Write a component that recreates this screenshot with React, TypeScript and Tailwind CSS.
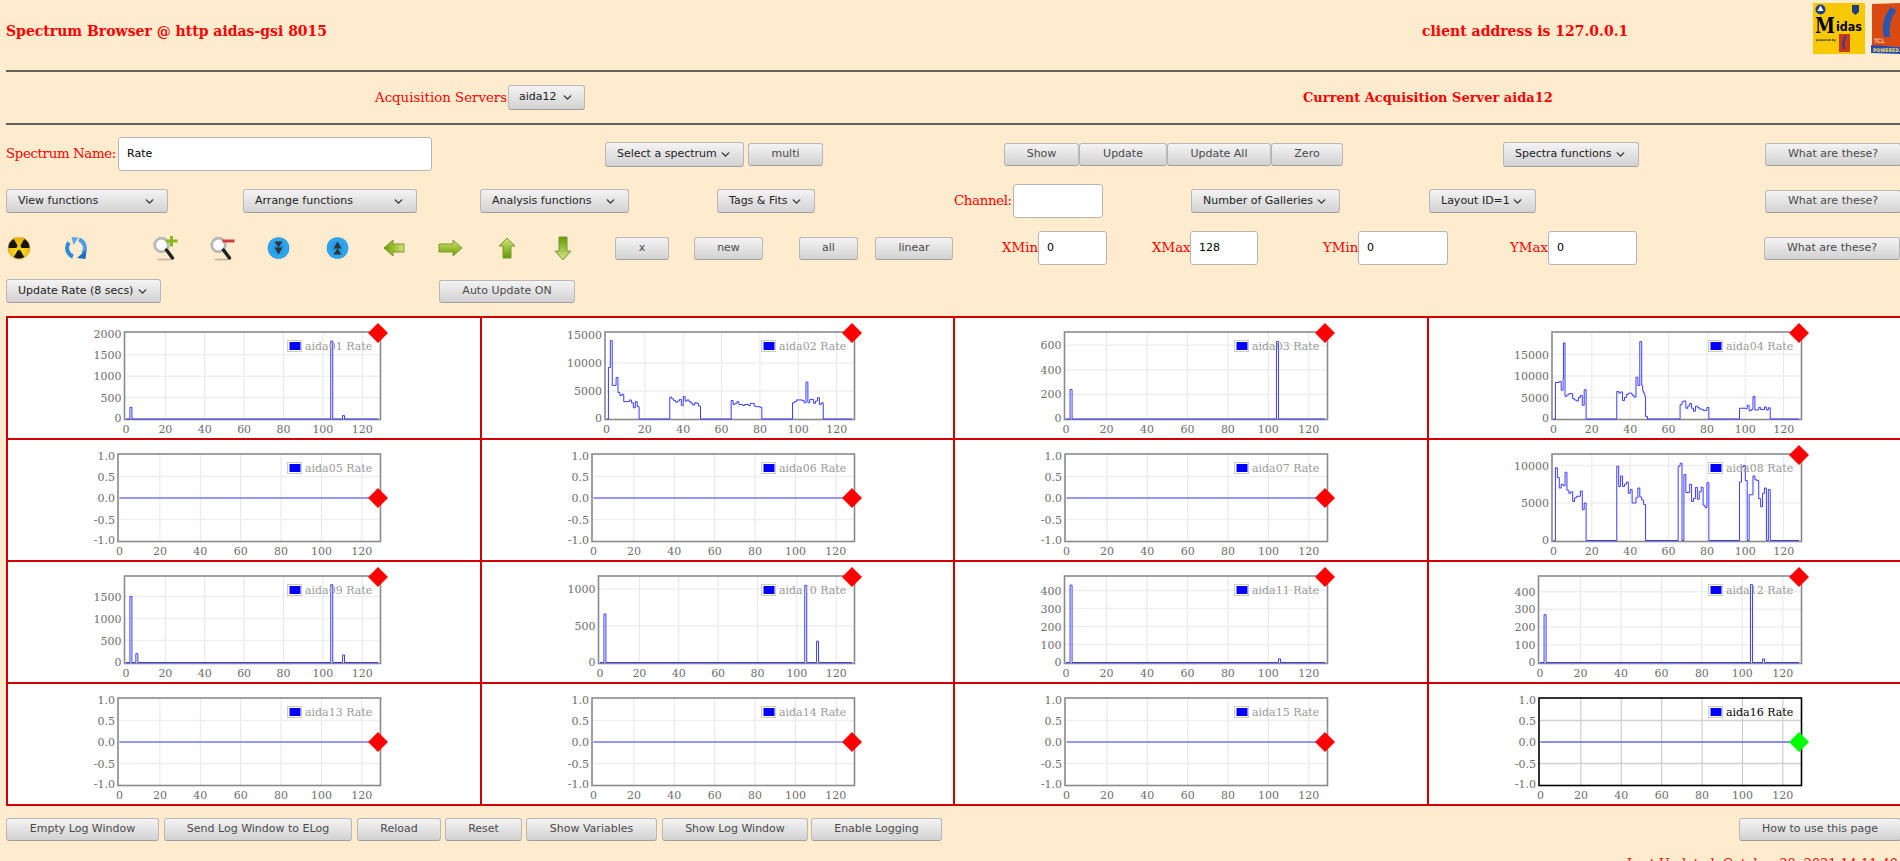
import type { ReactNode } from 'react'
import { ChevronDown } from 'lucide-react'

type Step = [number, number]

type ChartDef = {
  name: string
  plotLeft: number
  y0: number
  ppu: number
  ticks: number[]
  steps?: Step[]
  flat?: boolean
  active?: boolean
}

const aida02: Step[] = [[1,9200],[2,14000],[3,6000],[5,7400],[6,4700],[7,4200],[8,4400],[9,3100],[12,3400],[13,2900],[14,2000],[15,3100],[16,2200],[17,0],
  [33,3900],[34,3600],[35,3300],[36,3000],[37,3200],[38,3500],[39,2400],[40,4000],[41,3200],[42,3400],[43,3100],[44,2800],[45,2500],[46,2900],[47,2800],[48,2300],[49,0],
  [65,3300],[66,2600],[67,2800],[68,3100],[69,2600],[71,2400],[72,2600],[74,2400],[75,2800],[77,2300],[78,2200],[80,2100],[81,0],
  [97,2900],[98,3100],[99,3400],[102,3300],[103,2900],[104,6600],[105,2900],[106,3500],[108,2800],[109,3200],[110,3800],[111,2600],[112,2900],[113,0]]

const aida04: Step[] = [[1,8500],[3,8700],[4,6700],[5,9400],[5.2,17700],[6,5300],[7,5600],[8,5900],[10,4700],[11,4400],[12,4200],[13,5000],[14,5500],[15,3200],[16,6800],[17,0],
  [33,6400],[34,6000],[35,6300],[36,4300],[37,5000],[38,5700],[39,6000],[41,5500],[42,5100],[43,9700],[44,7800],[45,18000],[46,7800],[46.5,6500],[47,6000],[47.6,5300],[48,600],[49,0],
  [66,3300],[67,4000],[68,4200],[69,2500],[70,3000],[71,3600],[72,2500],[73,1800],[74,3000],[75,2700],[76,2300],[78,2000],[80,2700],[81,0],
  [97,2500],[100,2400],[101,3200],[102,1900],[103,2200],[104,5200],[105,2100],[107,2700],[108,2200],[110,2800],[111,2100],[112,2600],[113,0]]

const aida08: Step[] = [[1,9700],[2,8400],[3,7000],[4,7500],[5,7300],[6,9100],[7,6700],[8,6300],[9,6500],[10,5200],[11,5700],[12,5900],[14,6600],[15,4100],[16,5000],[17,0],
  [33,9900],[34,7200],[35,8600],[36,7200],[37,7500],[38,7800],[39,6300],[40,6800],[41,5000],[43,5700],[44,7000],[45,5800],[46,5400],[47,4800],[48,0],
  [65,9900],[66,10300],[67,0],[68,8800],[69,6400],[71,7500],[72,5200],[73,5600],[74,7100],[75,5500],[76,6500],[77,7100],[78,4700],[79,4400],[80,7700],[81,0],
  [97,7800],[98,9800],[99,10000],[100,8000],[101,0],[102,6100],[104,8600],[105,8100],[106,8000],[107,5600],[108,4500],[109,6300],[110,7000],[111,0],[112,6800],[113,0]]

const flat = (name: string, plotLeft: number, active = false): ChartDef => ({
  name, plotLeft, y0: 60, ppu: 43, ticks: [1, 0.5, 0, -0.5, -1], flat: true, active,
})

const charts: ChartDef[] = [
  { name: 'aida01', plotLeft: 118.5, y0: 103, ppu: 0.0428, ticks: [2000, 1500, 1000, 500, 0], steps: [[2,270],[3,0],[104,1820],[105,0],[110,80],[111,0]] },
  { name: 'aida02', plotLeft: 125, y0: 103, ppu: 0.0056, ticks: [15000, 10000, 5000, 0], steps: aida02 },
  { name: 'aida03', plotLeft: 111.5, y0: 103, ppu: 0.123, ticks: [600, 400, 200, 0], steps: [[2,240],[3,0],[104,630],[105,0]] },
  { name: 'aida04', plotLeft: 125, y0: 103, ppu: 0.0043, ticks: [15000, 10000, 5000, 0], steps: aida04 },
  flat('aida05', 112), flat('aida06', 112), flat('aida07', 112),
  { name: 'aida08', plotLeft: 125, y0: 102.5, ppu: 0.0075, ticks: [10000, 5000, 0], steps: aida08 },
  { name: 'aida09', plotLeft: 118.5, y0: 102.5, ppu: 0.044, ticks: [1500, 1000, 500, 0], steps: [[2,1500],[3,0],[5,200],[6,0],[104,1770],[105,0],[110,170],[111,0]] },
  { name: 'aida10', plotLeft: 118.5, y0: 102.5, ppu: 0.0735, ticks: [1000, 500, 0], steps: [[2,660],[3,0],[104,1050],[105,0],[110,290],[111,0]] },
  { name: 'aida11', plotLeft: 111.5, y0: 102.5, ppu: 0.18, ticks: [400, 300, 200, 100, 0], steps: [[2,430],[3,0],[105,20],[106,0]] },
  { name: 'aida12', plotLeft: 111.5, y0: 102.5, ppu: 0.177, ticks: [400, 300, 200, 100, 0], steps: [[2,270],[3,0],[104,440],[105,0],[110,20],[111,0]] },
  flat('aida13', 112), flat('aida14', 112), flat('aida15', 112), flat('aida16', 112, true),
]

function Chart({ c }: { c: ChartDef }) {
  const right = 374.5
  const x0 = c.plotLeft + 1.5
  const x128 = 372
  const X = (v: number) => x0 + (v * (x128 - x0)) / 128
  const Y = (v: number) => c.y0 - v * c.ppu
  let d = `M${X(0)} ${Y(0)}`
  let prev = 0
  for (const [x, v] of c.steps ?? []) {
    d += ` L${X(x)} ${Y(prev)} L${X(x)} ${Y(v)}`
    prev = v
  }
  d += ` L${X(128)} ${Y(prev)}`
  const frame = c.active ? '#000000' : '#8a8a8a'
  const gridV = c.active ? '#c4c4c4' : '#e6e6e6'
  const gridH = c.active ? '#d0d0d0' : '#efefef'
  const markerY = c.flat ? 60 : 17
  return (
    <svg viewBox="2 2 471.5 120" className="block w-[471.5px] h-[120px] font-['DejaVu_Serif',serif]">
      {[20, 40, 60, 80, 100, 120].map(v => (
        <line key={v} x1={X(v)} x2={X(v)} y1={16} y2={103.5} stroke={gridV} strokeWidth={1} />
      ))}
      {c.ticks.filter(t => Y(t) > 20 && Y(t) < 100).map(t => (
        <line key={t} x1={c.plotLeft} x2={right} y1={Y(t)} y2={Y(t)} stroke={gridH} strokeWidth={1.6} />
      ))}
      <rect x={c.plotLeft} y={16} width={right - c.plotLeft} height={87.5} fill="none" stroke={frame} strokeWidth={1.6} />
      <path d={d} fill="none" stroke="#3c3cff" strokeWidth={1} />
      <rect x={281.5} y={24.5} width={14} height={11} fill="#ffffff" stroke="#cccccc" strokeWidth={1} />
      <rect x={283.5} y={26} width={11} height={8} fill="#0000ff" />
      <text x={299} y={33.5} fontSize={11} fill={c.active ? '#000000' : '#9a9a9a'}>{c.name} Rate</text>
      {c.ticks.map(t => (
        <text key={t} x={c.plotLeft - 3} y={Math.max(Math.min(Y(t), 102), 18) + 4} fontSize={11} fill="#6e6e6e" textAnchor="end">
          {c.flat ? t.toFixed(1) : t}
        </text>
      ))}
      {[0, 20, 40, 60, 80, 100, 120].map(v => (
        <text key={v} x={X(v)} y={117} fontSize={11} fill="#6e6e6e" textAnchor="middle">{v}</text>
      ))}
      <polygon points={`${x128},${markerY - 10} ${x128 + 10},${markerY} ${x128},${markerY + 10} ${x128 - 10},${markerY}`} fill={c.active ? '#00ff00' : '#ff0000'} />
    </svg>
  )
}

function Btn({ className, children, menu, dark }: { className: string; children: ReactNode; menu?: boolean; dark?: boolean }) {
  return (
    <button className={`${className} shrink-0 flex items-center justify-between rounded-[3px] border border-[#b8b8b8] border-b-[#a0a0a0] bg-linear-to-b from-[#f4f4f4] to-[#d2d2d2] text-[11px] whitespace-nowrap ${menu ? 'text-[#222222] px-[11px] h-[25px]' : 'h-[23px] justify-center'} ${dark ? 'text-[#222222]' : menu ? '' : 'text-[#4a4a4a]'}`}>
      <span>{children}</span>
      {menu && <ChevronDown size={13} strokeWidth={2.6} className="text-[#333333] shrink-0" />}
    </button>
  )
}

function Field({ className, value }: { className: string; value?: string }) {
  return (
    <div className={`${className} shrink-0 h-[34px] flex items-center pl-[8px] bg-white border border-[#b5b5b5] rounded-[3px] text-[11px] text-black`}>
      {value}
    </div>
  )
}

function Label({ className, children }: { className: string; children: ReactNode }) {
  return <span className={`${className} shrink-0 font-['DejaVu_Serif',serif] text-[13.33px] text-[#ff0000] whitespace-nowrap`}>{children}</span>
}

function Radiation() {
  return (
    <svg width="24" height="24" viewBox="0 0 24 24" className="shrink-0 ml-[7px]">
      <defs>
        <radialGradient id="radY" cx="50%" cy="70%" r="60%">
          <stop offset="0%" stopColor="#ffdf30" />
          <stop offset="100%" stopColor="#e8b400" />
        </radialGradient>
      </defs>
      <circle cx="12" cy="12" r="11" fill="url(#radY)" stroke="#b08a20" strokeWidth="0.5" />
      <path d="M12 12 L17.25 2.9 A10.5 10.5 0 0 1 22.5 12 Z" fill="#151515" />
      <path d="M12 12 L6.75 2.9 A10.5 10.5 0 0 0 1.5 12 Z" fill="#151515" />
      <path d="M12 12 L17.25 21.1 A10.5 10.5 0 0 1 6.75 21.1 Z" fill="#151515" />
      <circle cx="12" cy="12" r="2.4" fill="#f4c800" />
      <path d="M5 3.5 A11 11 0 0 1 19 3.5 A14 14 0 0 0 5 3.5 Z" fill="#f0e8c8" />
    </svg>
  )
}

function Refresh() {
  return (
    <svg width="24" height="24" viewBox="0 0 24 24" className="shrink-0 ml-[33px]" fill="none">
      <path d="M9 20.5 A9 9 0 0 1 5 6.5" stroke="#2f8ad8" strokeWidth="4" />
      <path d="M7.5 1 L14.5 1.5 L9.5 9 Z" fill="#5aa8e8" />
      <path d="M15 3.5 A9 9 0 0 1 19 17.5" stroke="#4aa0e8" strokeWidth="4" />
      <path d="M22.5 13.5 L21.5 23 L13 22 Z" fill="#1c6cc0" />
    </svg>
  )
}

function Magnifier({ className, plus }: { className: string; plus?: boolean }) {
  return (
    <svg width="25" height="25" viewBox="0 0 25 25" className={`${className} shrink-0`} fill="none">
      <ellipse cx="12" cy="23.5" rx="8" ry="1" fill="#c8b8a0" />
      <circle cx="8.5" cy="9" r="6.8" fill="#ffffff" stroke="#b8b8b8" strokeWidth="2.8" />
      <path d="M13.5 14 L19.5 22" stroke="#222222" strokeWidth="3.4" strokeLinecap="round" />
      {plus ? (
        <path d="M18.5 0 V10.5 M13 5 H24.5" stroke="#88b820" strokeWidth="3" />
      ) : (
        <path d="M12.5 5 H24.5" stroke="#d83a3a" strokeWidth="3" />
      )}
    </svg>
  )
}

function BlueButton({ className, up }: { className: string; up?: boolean }) {
  return (
    <svg width="23" height="24" viewBox="0 0 23 24" className={`${className} shrink-0`}>
      <defs>
        <radialGradient id="blueBtn" cx="50%" cy="50%" r="55%">
          <stop offset="0%" stopColor="#1a90e0" />
          <stop offset="80%" stopColor="#30a8f0" />
          <stop offset="100%" stopColor="#1878c8" />
        </radialGradient>
      </defs>
      <circle cx="11.5" cy="12" r="10.8" fill="url(#blueBtn)" />
      <g transform={up ? 'rotate(180 11.5 12)' : undefined} fill="#333333">
        <path d="M7.5 5.5 H15.5 L11.5 11.5 Z" />
        <path d="M7.5 11.5 H15.5 L11.5 18.5 Z" />
      </g>
    </svg>
  )
}

function GreenArrow({ className, dir }: { className: string; dir: 'left' | 'right' | 'up' | 'down' }) {
  const shapes = {
    left: { w: 22, h: 18, points: '1,9 10,1 10,5 21,5 21,13 10,13 10,17', from: '#68a000', to: '#d8e070', x2: '100%', y2: '0%' },
    right: { w: 25, h: 18, points: '24,9 15,1 15,5 1,5 1,13 15,13 15,17', from: '#d0e070', to: '#6ea400', x2: '0%', y2: '100%' },
    up: { w: 18, h: 22, points: '9,1 17,9 13,9 13,21 5,21 5,9 1,9', from: '#d4e478', to: '#5f9c00', x2: '0%', y2: '100%' },
    down: { w: 18, h: 25, points: '9,24 17,15 13,15 13,1 5,1 5,15 1,15', from: '#5f9c00', to: '#d8e68a', x2: '0%', y2: '100%' },
  }
  const s = shapes[dir]
  return (
    <svg width={s.w} height={s.h} viewBox={`0 0 ${s.w} ${s.h}`} className={`${className} shrink-0`}>
      <defs>
        <linearGradient id={`arrow-${dir}`} x1="0%" y1="0%" x2={s.x2} y2={s.y2}>
          <stop offset="0%" stopColor={s.from} />
          <stop offset="100%" stopColor={s.to} />
        </linearGradient>
      </defs>
      <polygon points={s.points} fill={`url(#arrow-${dir})`} stroke="#76983a" strokeWidth="1" />
    </svg>
  )
}

function MidasLogo() {
  return (
    <svg width="52" height="51" viewBox="0 0 52 51" className="shrink-0">
      <rect width="52" height="51" fill="#f8c800" />
      <circle cx="7.5" cy="6.5" r="5" fill="#1d3f8a" />
      <path d="M4.5 8 L7.5 2.5 L10.5 8 Z" fill="#ffffff" />
      <path d="M39 2 H46 V9 L42.5 12 L39 9 Z" fill="#1d3f8a" />
      <text x="2" y="30" fontFamily="'DejaVu Serif',serif" fontWeight="700" fontSize="23" fill="#000000" textLength="20" lengthAdjust="spacingAndGlyphs">M</text>
      <text x="23" y="28" fontFamily="'DejaVu Sans',sans-serif" fontWeight="700" fontSize="13" fill="#000000" textLength="26" lengthAdjust="spacingAndGlyphs">idas</text>
      <text x="3" y="38" fontFamily="'DejaVu Sans',sans-serif" fontWeight="700" fontSize="3" fill="#222222">powered by</text>
      <rect x="26" y="31" width="11" height="18" fill="#c83a18" />
      <path d="M33 33 Q29 38 31 46" stroke="#2c3f90" strokeWidth="2" fill="none" />
    </svg>
  )
}

function TclLogo() {
  return (
    <svg width="30" height="52" viewBox="0 0 30 52" className="shrink-0 ml-[6px]">
      <path d="M1 1 L30 0 V44 L1 43 Z" fill="#d84a12" />
      <path d="M20 4 Q9 17 13 34 L19 34 Q17 20 25 7 Z" fill="#2a55b0" />
      <text x="3" y="40" fontFamily="'DejaVu Sans',sans-serif" fontSize="6" fill="#ffffff">TCL</text>
      <path d="M0 42 L30 44 V51 L0 50 Z" fill="#2a4ab0" />
      <text x="2" y="49" fontFamily="'DejaVu Sans',sans-serif" fontWeight="700" fontSize="5" fill="#f0e060" textLength="26" lengthAdjust="spacingAndGlyphs">POWERED</text>
    </svg>
  )
}

export default function App() {
  return (
    <div className="w-[1900px] h-[861px] overflow-hidden bg-[#ffebcd] font-['DejaVu_Sans',sans-serif]">
      {/* Title */}
      <div className="h-[70px] flex items-start">
        <span className="ml-[6px] mt-[21px] w-[1416px] shrink-0 font-['DejaVu_Serif',serif] font-bold text-[14px] text-[#ff0000] whitespace-nowrap">Spectrum Browser @ http aidas-gsi 8015</span>
        <span className="mt-[21px] w-[391px] shrink-0 font-['DejaVu_Serif',serif] font-bold text-[14px] text-[#ff0000] whitespace-nowrap">client address is 127.0.0.1</span>
        <div className="flex mt-[3px]">
          <MidasLogo />
          <TclLogo />
        </div>
      </div>
      <div className="ml-[6px] h-[2px] bg-[#606060]" />

      {/* Server row */}
      <div className="h-[51px] flex items-center">
        <Label className="ml-[375px] w-[133px]">Acquisition Servers</Label>
        <Btn menu dark className="w-[77px] !px-[10px]">aida12</Btn>
        <span className="ml-[718px] shrink-0 font-['DejaVu_Serif',serif] font-bold text-[13px] text-[#ff0000] whitespace-nowrap">Current Acquisition Server aida12</span>
      </div>
      <div className="ml-[6px] h-[2px] bg-[#606060]" />

      {/* Spectrum row */}
      <div className="mt-[12px] h-[34px] flex items-center">
        <Label className="ml-[6px] w-[112px] tracking-[-0.35px]">Spectrum Name:</Label>
        <Field className="w-[314px]" value="Rate" />
        <Btn menu className="ml-[173px] w-[139px]">Select a spectrum</Btn>
        <Btn className="ml-[4px] w-[75px]">multi</Btn>
        <Btn className="ml-[181px] w-[75px]">Show</Btn>
        <Btn className="w-[88px]">Update</Btn>
        <Btn className="w-[104px]">Update All</Btn>
        <Btn className="w-[72px]">Zero</Btn>
        <Btn menu className="ml-[160px] w-[136px]">Spectra functions</Btn>
        <Btn className="ml-[126px] w-[136px]">What are these?</Btn>
      </div>

      {/* Functions row */}
      <div className="mt-[13px] h-[34px] flex items-center">
        <Btn menu className="ml-[6px] w-[162px] !h-[24px]">View functions</Btn>
        <Btn menu className="ml-[75px] w-[174px] !h-[24px]">Arrange functions</Btn>
        <Btn menu className="ml-[63px] w-[149px] !h-[24px]">Analysis functions</Btn>
        <Btn menu className="ml-[88px] w-[98px] !h-[24px]">Tags &amp; Fits</Btn>
        <Label className="ml-[139px] w-[59px] tracking-[-0.35px]">Channel:</Label>
        <Field className="w-[90px]" />
        <Btn menu className="ml-[88px] w-[149px] !h-[24px]">Number of Galleries</Btn>
        <Btn menu className="ml-[89px] w-[107px] !h-[24px]">Layout ID=1</Btn>
        <Btn className="ml-[229px] w-[136px]">What are these?</Btn>
      </div>

      {/* Tool row */}
      <div className="mt-[13px] h-[34px] flex items-center">
        <Radiation />
        <Refresh />
        <Magnifier className="ml-[65px]" plus />
        <Magnifier className="ml-[32px]" />
        <BlueButton className="ml-[32px]" />
        <BlueButton className="ml-[36px]" up />
        <GreenArrow className="ml-[34px]" dir="left" />
        <GreenArrow className="ml-[33px]" dir="right" />
        <GreenArrow className="ml-[35px]" dir="up" />
        <GreenArrow className="ml-[38px]" dir="down" />
        <Btn className="ml-[43px] w-[54px]">x</Btn>
        <Btn className="ml-[25px] w-[69px]">new</Btn>
        <Btn className="ml-[36px] w-[59px]">all</Btn>
        <Btn className="ml-[17px] w-[78px]">linear</Btn>
        <Label className="ml-[49px] w-[36px]">XMin</Label>
        <Field className="w-[69px]" value="0" />
        <Label className="ml-[45px] w-[38px]">XMax</Label>
        <Field className="w-[68px]" value="128" />
        <Label className="ml-[65px] w-[35px]">YMin</Label>
        <Field className="w-[90px]" value="0" />
        <Label className="ml-[62px] w-[38px]">YMax</Label>
        <Field className="w-[89px]" value="0" />
        <Btn className="ml-[127px] w-[136px]">What are these?</Btn>
      </div>

      {/* Update row */}
      <div className="mt-[14px] h-[24px] flex items-center">
        <Btn menu className="ml-[6px] w-[155px] !h-[24px]">Update Rate (8 secs)</Btn>
        <Btn className="ml-[278px] w-[136px]">Auto Update ON</Btn>
      </div>

      {/* Spectra table */}
      <div className="mt-[13px] ml-[6px] w-[1894px] border-b-2 border-[#d00000] grid grid-cols-[repeat(4,473.5px)]">
        {charts.map(c => (
          <div key={c.name} className="h-[122px] border-t-2 border-l-2 border-[#d00000] bg-white">
            <Chart c={c} />
          </div>
        ))}
      </div>

      {/* Bottom buttons */}
      <div className="mt-[12px] h-[23px] flex items-center">
        <Btn className="ml-[6px] w-[153px]">Empty Log Window</Btn>
        <Btn className="ml-[5px] w-[188px]">Send Log Window to ELog</Btn>
        <Btn className="ml-[5px] w-[84px]">Reload</Btn>
        <Btn className="ml-[4px] w-[77px]">Reset</Btn>
        <Btn className="ml-[4px] w-[131px]">Show Variables</Btn>
        <Btn className="ml-[5px] w-[146px]">Show Log Window</Btn>
        <Btn className="ml-[3px] w-[131px]">Enable Logging</Btn>
        <Btn className="ml-[797px] w-[162px]">How to use this page</Btn>
      </div>
      <div className="mt-[13px] ml-[1627px] font-['DejaVu_Serif',serif] text-[12.8px] text-[#ff0000] whitespace-nowrap">Last Updated: October 28, 2021 14:11:40</div>
    </div>
  )
}
